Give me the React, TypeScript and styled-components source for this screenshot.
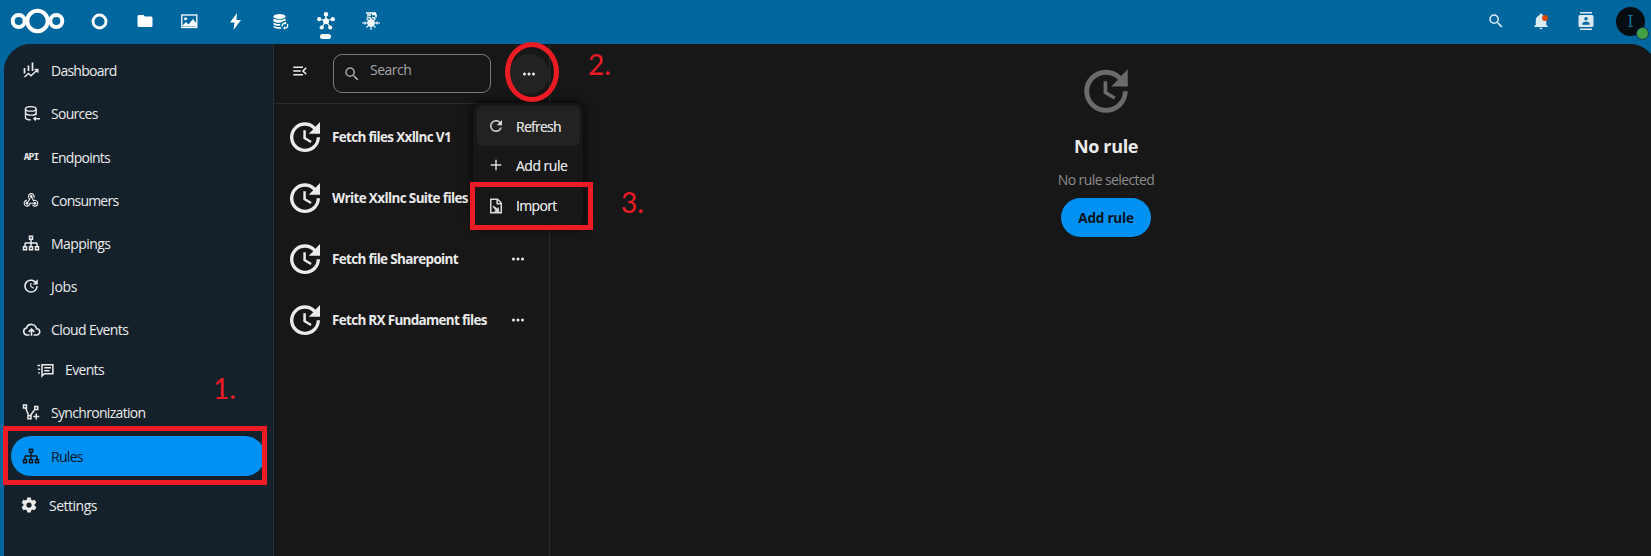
import React from "react";
import styled, { createGlobalStyle } from "styled-components";

const GlobalStyle = createGlobalStyle`
  * { box-sizing: border-box; }
  body {
    margin: 0;
    overflow: hidden;
    background: #00679e;
    color: #ebebeb;
    font-family: "Open Sans", "Noto Sans", sans-serif;
    font-size: 14px;
  }
  button { font: inherit; color: inherit; border: 0; background: none; padding: 0; }
`;

const Page = styled.div`
  position: relative;
  display: flex;
  flex-direction: column;
  width: 1651px;
  height: 556px;
  overflow: hidden;
`;

const TopBar = styled.header`
  display: flex;
  align-items: flex-start;
  justify-content: space-between;
  height: 44px;
  padding: 0 6px 0 10px;
  color: #fff;
`;

const AppMenu = styled.nav`
  display: flex;
`;

const Logo = styled.svg`
  display: block;
  margin: 8px 12px 0 0;
`;

const AppLink = styled.a`
  position: relative;
  display: flex;
  align-items: center;
  justify-content: center;
  width: 45.2px;
  height: 42px;
`;

const ActiveMark = styled.span`
  position: absolute;
  left: 17px;
  top: 34px;
  width: 11px;
  height: 5px;
  border-radius: 3px;
  background: #fff;
`;

const HeaderTools = styled.div`
  display: flex;
  align-items: center;
  height: 42px;
  color: #dceaf3;
`;

const Tool = styled.button`
  position: relative;
  display: flex;
  align-items: center;
  justify-content: center;
  width: 45.3px;
  height: 43px;
`;

const AlertDot = styled.span`
  position: absolute;
  left: 24px;
  top: 15px;
  width: 6px;
  height: 6px;
  border-radius: 50%;
  background: #d9480f;
`;

const Avatar = styled.div`
  position: relative;
  display: flex;
  align-items: center;
  justify-content: center;
  width: 29px;
  height: 29px;
  margin-left: 7px;
  border-radius: 50%;
  background: #050c12;
  color: #17739a;
  font: 16px "DejaVu Serif", serif;
`;

const Status = styled.span`
  position: absolute;
  left: 20px;
  top: 20px;
  width: 13px;
  height: 13px;
  border: 1px solid #12344a;
  border-radius: 50%;
  background: #41a046;
`;

const Content = styled.main`
  display: flex;
  flex: 1;
  margin: 0 -6px 0 4px;
  border-radius: 27px 27px 0 0;
  overflow: hidden;
  background: #171717;
`;

const Sidebar = styled.aside`
  width: 270px;
  padding: 6px 0 0 7px;
  border-right: 1px solid #2b3033;
  background: #14212a;
`;

const NavItem = styled.a<{ $active?: boolean; $nested?: boolean; $gap?: number }>`
  display: flex;
  align-items: center;
  width: 254px;
  height: ${(p) => (p.$nested ? 37 : 40)}px;
  margin-bottom: ${(p) => p.$gap ?? 3}px;
  padding-left: ${(p) => (p.$nested ? 24 : 10)}px;
  border-radius: 20px;
  background: ${(p) => (p.$active ? "#0091f2" : "transparent")};
  color: ${(p) => (p.$active ? "#07151f" : "#ebebeb")};
`;

const NavIcon = styled.span<{ $gap?: number; $shift?: number }>`
  display: flex;
  align-items: center;
  justify-content: center;
  width: 20px;
  margin-left: ${(p) => p.$shift ?? 0}px;
  margin-right: ${(p) => p.$gap ?? 10}px;
`;

const ApiMark = styled.b`
  font: 700 9.5px/9px "DejaVu Sans Mono", monospace;
  letter-spacing: -0.9px;
  margin-bottom: 2px;
`;

const Label = styled.span<{ $track?: number }>`
  white-space: nowrap;
  letter-spacing: ${(p) => p.$track ?? -0.3}px;
`;

const ListPane = styled.section`
  width: 276px;
  border-right: 1px solid #2b2b2b;
`;

const ListHeader = styled.div`
  display: flex;
  align-items: center;
  height: 60px;
  padding-left: 17px;
  border-bottom: 1px solid #2b2b2b;
`;

const CollapseButton = styled.button`
  display: flex;
  margin-bottom: 5px;
`;

const SearchBox = styled.label`
  display: flex;
  align-items: center;
  width: 158px;
  height: 39px;
  margin: 0 18px 0 24px;
  padding-left: 9px;
  border: 1px solid #7a7a7a;
  border-radius: 9px;
  color: #a5a5a5;
`;

const Placeholder = styled.span`
  margin: 0 0 9px 9px;
  letter-spacing: -0.5px;
`;

const MoreButton = styled.button<{ $open?: boolean }>`
  display: flex;
  align-items: center;
  justify-content: center;
  width: 40px;
  height: 40px;
  flex: none;
  border-radius: 50%;
  background: ${(p) => (p.$open ? "#222" : "transparent")};
`;

const RuleRow = styled.div`
  display: flex;
  align-items: center;
  height: 61px;
  padding-left: 11px;
`;

const RuleList = styled.div`
  padding-top: 2px;
`;

const RuleName = styled.strong<{ $track: number }>`
  flex: 1;
  margin-left: 7px;
  font-weight: 700;
  font-size: 13.5px;
  white-space: nowrap;
  letter-spacing: ${(p) => p.$track}px;
`;

const RuleAction = styled.span`
  display: flex;
  width: 51px;
`;

const Detail = styled.section`
  display: flex;
  flex: 1;
  flex-direction: column;
  align-items: center;
  padding: 18px 0 0 5px;
`;

const EmptyTitle = styled.h2`
  margin: 13px 0 0;
  font-size: 18px;
  line-height: 26px;
  font-weight: 700;
  letter-spacing: -0.35px;
`;

const EmptyText = styled.p`
  margin: 11px 0 8px;
  line-height: 20px;
  color: #8c8c8c;
  letter-spacing: -0.6px;
`;

const PrimaryButton = styled.button`
  width: 90px;
  height: 39px;
  border-radius: 20px;
  background: #0091f2;
  color: #05121c;
  font-weight: 700;
  font-size: 13.5px;
  letter-spacing: -0.2px;
`;

const Menu = styled.div`
  position: absolute;
  left: 473px;
  top: 103px;
  width: 110px;
  height: 124px;
  padding: 3px 3px 3px 4px;
  border-radius: 8px;
  background: #171717;
  box-shadow: 0 0 10px #000;
  color: #dadada;
`;

const MenuItem = styled.button<{ $hover?: boolean }>`
  display: flex;
  align-items: center;
  gap: 11px;
  width: 103px;
  height: 39.7px;
  padding: 1px 0 0 10px;
  border-radius: 6px;
  background: ${(p) => (p.$hover ? "#222" : "transparent")};
  text-shadow: 0 0 0.5px currentColor;

  &:nth-child(2) {
    padding: 0 0 1px 10px;
  }
`;

const Highlight = styled.div<{ $x: number; $y: number; $w: number; $h: number; $round?: boolean }>`
  position: absolute;
  left: ${(p) => p.$x}px;
  top: ${(p) => p.$y}px;
  width: ${(p) => p.$w}px;
  height: ${(p) => p.$h}px;
  border: 5px solid #ed1c24;
  border-radius: ${(p) => (p.$round ? "50%" : "0")};
`;

const Step = styled.span<{ $x: number; $y: number }>`
  position: absolute;
  left: ${(p) => p.$x}px;
  top: ${(p) => p.$y}px;
  color: #ed1c24;
  font: 28px/32px Lato, sans-serif;
`;

const paths = {
  update:
    "M21,10.12H14.22L16.96,7.3C14.23,4.6 9.81,4.5 7.08,7.2C4.35,9.91 4.35,14.28 7.08,17C9.81,19.7 14.23,19.7 16.96,17C18.32,15.65 19,14.08 19,12.1H21C21,14.08 20.12,16.65 18.36,18.39C14.85,21.87 9.15,21.87 5.64,18.39C2.14,14.92 2.11,9.28 5.62,5.81C9.13,2.34 14.76,2.34 18.27,5.81L21,3V10.12M12.5,8V12.25L16,14.33L15.28,15.54L11,13V8H12.5Z",
  sitemap:
    "M9 2V8H11V11H5C3.89 11 3 11.89 3 13V16H1V22H7V16H5V13H11V16H9V22H15V16H13V13H19V16H17V22H23V16H21V13C21 11.89 20.11 11 19 11H13V8H15V2H9M11 4H13V6H11V4M3 18H5V20H3V18M11 18H13V20H11V18M19 18H21V20H19V18Z",
  cog: "M12,15.5A3.5,3.5 0 0,1 8.5,12A3.5,3.5 0 0,1 12,8.5A3.5,3.5 0 0,1 15.5,12A3.5,3.5 0 0,1 12,15.5M19.43,12.97C19.47,12.65 19.5,12.33 19.5,12C19.5,11.67 19.47,11.34 19.43,11L21.54,9.37C21.73,9.22 21.78,8.95 21.66,8.73L19.66,5.27C19.54,5.05 19.27,4.96 19.05,5.05L16.56,6.05C16.04,5.66 15.5,5.32 14.87,5.07L14.5,2.42C14.46,2.18 14.25,2 14,2H10C9.75,2 9.54,2.18 9.5,2.42L9.13,5.07C8.5,5.32 7.96,5.66 7.44,6.05L4.95,5.05C4.73,4.96 4.46,5.05 4.34,5.27L2.34,8.73C2.21,8.95 2.27,9.22 2.46,9.37L4.57,11C4.53,11.34 4.5,11.67 4.5,12C4.5,12.33 4.53,12.65 4.57,12.97L2.46,14.63C2.27,14.78 2.21,15.05 2.34,15.27L4.34,18.73C4.46,18.95 4.73,19.03 4.95,18.95L7.44,17.94C7.96,18.34 8.5,18.68 9.13,18.93L9.5,21.58C9.54,21.82 9.75,22 10,22H14C14.25,22 14.46,21.82 14.5,21.58L14.87,18.93C15.5,18.67 16.04,18.34 16.56,17.94L19.05,18.95C19.27,19.03 19.54,18.95 19.66,18.73L21.66,15.27C21.78,15.05 21.73,14.78 21.54,14.63L19.43,12.97Z",
  webhook:
    "M10.46,19C9,21.07 6.15,21.59 4.09,20.15C2.04,18.71 1.56,15.84 3,13.75C3.87,12.5 5.21,11.83 6.58,11.77L6.63,13.2C5.72,13.27 4.84,13.74 4.27,14.56C3.27,16 3.58,17.94 4.95,18.91C6.33,19.87 8.26,19.5 9.26,18.07C9.57,17.62 9.75,17.13 9.82,16.63V15.62L15.4,15.58L15.47,15.47C16,14.55 17.15,14.23 18.05,14.75C18.95,15.27 19.26,16.43 18.73,17.35C18.2,18.26 17.04,18.58 16.14,18.06C15.73,17.83 15.44,17.46 15.31,17.04L11.24,17.06C11.13,17.73 10.87,18.38 10.46,19M17.74,11.86C20.27,12.17 22.07,14.44 21.76,16.93C21.45,19.43 19.15,21.2 16.62,20.89C15.13,20.71 13.9,19.86 13.19,18.68L14.43,17.96C14.92,18.73 15.75,19.28 16.75,19.41C18.5,19.62 20.05,18.43 20.26,16.76C20.47,15.09 19.23,13.56 17.5,13.35C16.96,13.29 16.44,13.36 15.97,13.53L15.12,13.97L12.54,9.2H12.32C11.26,9.16 10.41,8.29 10.44,7.25C10.47,6.21 11.4,5.4 12.45,5.44C13.5,5.5 14.33,6.35 14.3,7.39C14.28,7.83 14.11,8.23 13.84,8.54L15.74,12.05C16.36,11.85 17.04,11.78 17.74,11.86M8.25,9.14C7.25,6.79 8.31,4.1 10.62,3.12C12.94,2.14 15.62,3.25 16.62,5.6C17.21,6.97 17.09,8.47 16.42,9.67L15.18,8.95C15.6,8.14 15.67,7.15 15.27,6.22C14.59,4.62 12.78,3.85 11.23,4.5C9.67,5.16 8.97,7 9.65,8.6C9.93,9.26 10.4,9.77 10.97,10.11L11.36,10.32L8.29,15.31C8.32,15.36 8.36,15.42 8.39,15.5C8.88,16.41 8.54,17.56 7.62,18.05C6.71,18.54 5.56,18.18 5.06,17.24C4.57,16.31 4.91,15.16 5.83,14.67C6.22,14.46 6.65,14.41 7.06,14.5L9.37,10.73C8.9,10.3 8.5,9.76 8.25,9.14Z",
  search:
    "M9.5,3A6.5,6.5 0 0,1 16,9.5C16,11.11 15.41,12.59 14.44,13.73L14.71,14H15.5L20.5,19L19,20.5L14,15.5V14.71L13.73,14.44C12.59,15.41 11.11,16 9.5,16A6.5,6.5 0 0,1 3,9.5A6.5,6.5 0 0,1 9.5,3M9.5,5C7,5 5,7 5,9.5C5,12 7,14 9.5,14C12,14 14,12 14,9.5C14,7 12,5 9.5,5Z",
  bell: "M21,19V20H3V19L5,17V11C5,7.9 7.03,5.17 10,4.29C10,4.19 10,4.1 10,4A2,2 0 0,1 12,2A2,2 0 0,1 14,4C14,4.1 14,4.19 14,4.29C16.97,5.17 19,7.9 19,11V17L21,19M14,21A2,2 0 0,1 12,23A2,2 0 0,1 10,21",
  contacts:
    "M20,0H4V2H20V0M4,24H20V22H4V24M20,4H4A2,2 0 0,0 2,6V18A2,2 0 0,0 4,20H20A2,2 0 0,0 22,18V6A2,2 0 0,0 20,4M12,6.75A2.25,2.25 0 0,1 14.25,9A2.25,2.25 0 0,1 12,11.25A2.25,2.25 0 0,1 9.75,9A2.25,2.25 0 0,1 12,6.75M17,17H7V15.5C7,13.83 10.33,13 12,13C13.67,13 17,13.83 17,15.5V17Z",
  folder: "M10,4H4C2.89,4 2,4.89 2,6V18A2,2 0 0,0 4,20H20A2,2 0 0,0 22,18V8C22,6.89 21.1,6 20,6H12L10,4Z",
  refresh:
    "M17.65,6.35C16.2,4.9 14.21,4 12,4A8,8 0 0,0 4,12A8,8 0 0,0 12,20C15.73,20 18.84,17.45 19.73,14H17.65C16.83,16.33 14.61,18 12,18A6,6 0 0,1 6,12A6,6 0 0,1 12,6C13.66,6 15.14,6.69 16.22,7.78L13,11H20V4L17.65,6.35Z",
  plus: "M19,13H13V19H11V13H5V11H11V5H13V11H19V13Z",
  dots: "M16,12A2,2 0 0,1 18,10A2,2 0 0,1 20,12A2,2 0 0,1 18,14A2,2 0 0,1 16,12M10,12A2,2 0 0,1 12,10A2,2 0 0,1 14,12A2,2 0 0,1 12,14A2,2 0 0,1 10,12M4,12A2,2 0 0,1 6,10A2,2 0 0,1 8,12A2,2 0 0,1 6,14A2,2 0 0,1 4,12Z",
  menuOpen:
    "M21,15.61L19.59,17L14.58,12L19.59,7L21,8.39L17.44,12L21,15.61M3,6H16V8H3V6M3,13V11H13V13H3M3,18V16H16V18H3Z",
};

function Icon({ name, size = 20 }: { name: keyof typeof paths; size?: number }) {
  return (
    <svg width={size} height={size} viewBox="0 0 24 24" fill="currentColor">
      <path d={paths[name]} />
    </svg>
  );
}

const lineProps = { fill: "none", stroke: "currentColor", strokeWidth: 2 };

const DashboardIcon = () => (
  <svg width="16" height="16" viewBox="0 0 16 16" {...lineProps} strokeWidth={1.4}>
    <path d="M1.500 11.500V6M5.500 9V3.500M9.500 9V.5" strokeWidth="1.700" />
    <path d="M1.500 15l4-3.500 2.500 2.300 6.500-6M11.500 7.500h3.300v3.300" />
  </svg>
);

const SourcesIcon = () => (
  <svg width="17" height="17" viewBox="0 0 24 24" {...lineProps}>
    <ellipse cx="11" cy="5.500" rx="7.500" ry="3.200" />
    <path d="M3.500 5.500v12.500c0 1.800 3 3 7.500 3M18.500 5.500v9M3.500 11.500c1 2 4 2.800 7.500 2.800s6.500-.8 7.500-2.600M18 17l-2.500 2.500L18 22M15.500 19.500H24" />
  </svg>
);

const CloudIcon = () => (
  <svg width="19" height="19" viewBox="0 0 24 24" {...lineProps}>
    <path d="M9.500 19H6.500a4.500 4.500 0 0 1-.8-8.900A6.500 6.500 0 0 1 18.300 11a4 4 0 0 1 .2 8h-4M12 20v-8M8.500 15l3.500-3.500 3.500 3.500" />
  </svg>
);

const EventsIcon = () => (
  <svg width="18" height="18" viewBox="0 0 24 24" {...lineProps}>
    <path d="M8 20V5h14.500v12H11zM11 9h9M11 13h7M2 6h3.500M2.500 11h3M3 16h2" />
  </svg>
);

const SyncIcon = () => (
  <svg width="18" height="18" viewBox="0 0 24 24" {...lineProps}>
    <path d="M2 2.500h4v4H2zM17 4.500h4v4h-4zM8 17h4v4H8zM5 7l4 10M17.500 8L11 17M19 14v8M15 18h8" />
  </svg>
);

const ImportIcon = () => (
  <svg width="18" height="18" viewBox="0 0 24 24" {...lineProps}>
    <path d="M5 3h9l5 5v13H5zM13.500 3v6H19" />
    <path d="M8 12l2 1 4 3 1-2 1 6-6-1 2-1.500-3-3z" fill="currentColor" strokeWidth="1" />
  </svg>
);

const PhotosIcon = () => (
  <svg width="17" height="17" viewBox="0 0 17 17" fill="#fff">
    <rect x=".8" y="2" width="15" height="12.500" fill="none" stroke="#fff" strokeWidth="1.300" />
    <circle cx="4.600" cy="5.700" r="1.500" />
    <path d="M2 13.500V12l3-3 2.500 2.500L12 6l3.500 4.500v3z" />
  </svg>
);

const DatabaseSyncIcon = () => (
  <svg width="17" height="17" viewBox="0 0 17 17" fill="#fff">
    <ellipse cx="7.500" cy="3.500" rx="6" ry="2.500" />
    <path d="M1.500 5.200c2 2 10 2 12 0v2.500c-2 .2-4 1-4.700 2-3 .3-6-.2-7.300-1.300zM1.500 9.500c1.500 1.200 4 1.600 6.700 1.500v1.800c-3 .2-5.500-.3-6.700-1.300zM1.500 12.700c1.500 1.100 4 1.500 7 1.300l1 1.700c-4 .3-7.500-.5-8-1.500z" />
    <path d="M10.300 13.500a2.700 2.700 0 0 1 3-3.300M15.300 11a2.700 2.700 0 0 1-3 4" fill="none" stroke="#fff" strokeWidth="1.300" />
    <path d="M12.700 8.300l2 1.800-2 1.700zM13 13.300l-2 1.700 2 1.700z" />
  </svg>
);

const HubIcon = () => (
  <svg width="18" height="18" viewBox="0 0 18 18" fill="#fff">
    <path d="M9 9V2.500M9 9L2.300 7M9 9l6.700-2M9 9l-4 6M9 9l4 6" stroke="#fff" strokeWidth="1.300" />
    <circle cx="9" cy="9.200" r="3" />
    <circle cx="9" cy="2.300" r="2.200" />
    <circle cx="2.200" cy="7.200" r="2.100" />
    <circle cx="15.800" cy="7.200" r="2.100" />
    <circle cx="4.700" cy="15.500" r="2.100" />
    <circle cx="13.300" cy="15.500" r="2.100" />
  </svg>
);

const CircuitIcon = () => (
  <svg width="18" height="18" viewBox="0 0 18 18" fill="none" stroke="#fff">
    <path d="M4 1h10M5 3h4M10 2.500h4v3M5 5l4 1M10 5.500l3 .5" strokeWidth="1.500" />
    <path d="M0 11h18M9 6v12M4.500 6.500l9 9M13.500 6.500l-9 9M3 9.500v3M15 9.500v3" strokeWidth="1.100" />
    <circle cx="9" cy="11" r="3" strokeWidth="1.400" />
    <circle cx="9" cy="11" r="1.200" fill="#fff" />
  </svg>
);

const rules = [
  { name: "Fetch files Xxllnc V1", track: -0.67 },
  { name: "Write Xxllnc Suite files", track: -0.63 },
  { name: "Fetch file Sharepoint", track: -0.66 },
  { name: "Fetch RX Fundament files", track: -0.7 },
];

export default function App() {
  return (
    <>
      <GlobalStyle />
      <Page>
        <TopBar>
          <AppMenu>
            <Logo width="55" height="26" viewBox="0 0 55 26" fill="none" stroke="#fff">
              <circle cx="27.500" cy="13" r="10.200" strokeWidth="4" />
              <circle cx="8.700" cy="13" r="6" strokeWidth="4" />
              <circle cx="46.300" cy="13" r="6" strokeWidth="4" />
            </Logo>
            <AppLink>
              <svg width="17" height="17" viewBox="0 0 17 17" fill="none" stroke="#fff">
                <circle cx="8.500" cy="8.500" r="6.500" strokeWidth="2.800" />
              </svg>
            </AppLink>
            <AppLink><Icon name="folder" size={18} /></AppLink>
            <AppLink><PhotosIcon /></AppLink>
            <AppLink>
              <svg width="13" height="17" viewBox="0 0 13 17" fill="#fff">
                <path d="M8 0L1 9.500h4.500L4.500 17 12 7H7.500z" />
              </svg>
            </AppLink>
            <AppLink><DatabaseSyncIcon /></AppLink>
            <AppLink><HubIcon /><ActiveMark /></AppLink>
            <AppLink><CircuitIcon /></AppLink>
          </AppMenu>
          <HeaderTools>
            <Tool><Icon name="search" size={18} /></Tool>
            <Tool><Icon name="bell" size={18} /><AlertDot /></Tool>
            <Tool><Icon name="contacts" size={18} /></Tool>
            <Avatar>I<Status /></Avatar>
          </HeaderTools>
        </TopBar>

        <Content>
          <Sidebar>
            <NavItem><NavIcon><DashboardIcon /></NavIcon><Label $track={-0.75}>Dashboard</Label></NavItem>
            <NavItem $gap={4}><NavIcon><SourcesIcon /></NavIcon><Label $track={-0.7}>Sources</Label></NavItem>
            <NavItem><NavIcon><ApiMark>API</ApiMark></NavIcon><Label $track={-0.75}>Endpoints</Label></NavItem>
            <NavItem><NavIcon><Icon name="webhook" size={18} /></NavIcon><Label $track={-0.78}>Consumers</Label></NavItem>
            <NavItem><NavIcon><Icon name="sitemap" size={18} /></NavIcon><Label $track={-0.57}>Mappings</Label></NavItem>
            <NavItem><NavIcon><Icon name="update" size={18} /></NavIcon><Label>Jobs</Label></NavItem>
            <NavItem $gap={2}><NavIcon><CloudIcon /></NavIcon><Label $track={-0.6}>Cloud Events</Label></NavItem>
            <NavItem $nested $gap={4}><NavIcon><EventsIcon /></NavIcon><Label $track={-0.65}>Events</Label></NavItem>
            <NavItem $gap={4}><NavIcon><SyncIcon /></NavIcon><Label $track={-0.68}>Synchronization</Label></NavItem>
            <NavItem $active $gap={9}><NavIcon><Icon name="sitemap" size={18} /></NavIcon><Label $track={-0.7}>Rules</Label></NavItem>
            <NavItem><NavIcon $shift={-2}><Icon name="cog" size={18} /></NavIcon><Label $track={-0.5}>Settings</Label></NavItem>
          </Sidebar>

          <ListPane>
            <ListHeader>
              <CollapseButton><Icon name="menuOpen" size={18} /></CollapseButton>
              <SearchBox>
                <Icon name="search" size={18} />
                <Placeholder>Search</Placeholder>
              </SearchBox>
              <MoreButton $open><Icon name="dots" size={18} /></MoreButton>
            </ListHeader>
            <RuleList>
              {rules.map((rule) => (
                <RuleRow key={rule.name}>
                  <Icon name="update" size={40} />
                  <RuleName $track={rule.track}>{rule.name}</RuleName>
                  <RuleAction><MoreButton><Icon name="dots" size={18} /></MoreButton></RuleAction>
                </RuleRow>
              ))}
            </RuleList>
          </ListPane>

          <Detail>
            <svg width="58" height="58" viewBox="0 0 24 24" fill="#6b6b6b"><path d={paths.update} /></svg>
            <EmptyTitle>No rule</EmptyTitle>
            <EmptyText>No rule selected</EmptyText>
            <PrimaryButton>Add rule</PrimaryButton>
          </Detail>
        </Content>

        <Menu>
          <MenuItem $hover><Icon name="refresh" size={18} /><Label $track={-0.75}>Refresh</Label></MenuItem>
          <MenuItem><Icon name="plus" size={18} /><Label $track={-0.5}>Add rule</Label></MenuItem>
          <MenuItem><ImportIcon /><Label $track={-0.65}>Import</Label></MenuItem>
        </Menu>

        <Highlight $x={3} $y={426} $w={264} $h={59} />
        <Highlight $x={505} $y={42} $w={54} $h={60} $round />
        <Highlight $x={470} $y={182} $w={123} $h={48} />
        <Step $x={213} $y={372}>1.</Step>
        <Step $x={588} $y={48}>2.</Step>
        <Step $x={621} $y={186}>3.</Step>
      </Page>
    </>
  );
}
